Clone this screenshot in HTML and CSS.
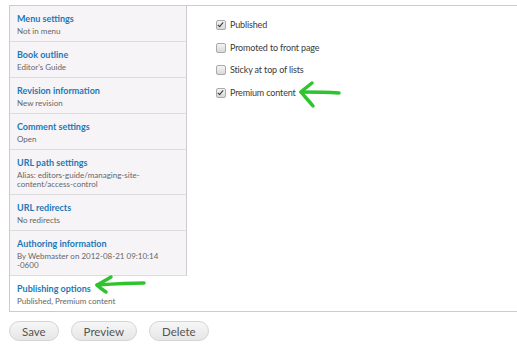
FILE: index.html
```html
<!DOCTYPE html>
<html lang="en">
<head>
    <meta charset="utf-8">
    <title>Publishing options</title>
    <link rel="stylesheet" href="styles.css">
</head>
<body>
    <div class="vtabs">
        <ul class="tabs">
            <li><a href="#">Menu settings</a><span>Not in menu</span></li>
            <li><a href="#">Book outline</a><span>Editor's Guide</span></li>
            <li><a href="#">Revision information</a><span>New revision</span></li>
            <li><a href="#">Comment settings</a><span>Open</span></li>
            <li><a href="#">URL path settings</a><span>Alias: editors-guide/managing-site-content/access-control</span></li>
            <li><a href="#">URL redirects</a><span>No redirects</span></li>
            <li><a href="#">Authoring information</a><span>By Webmaster on 2012-08-21 09:10:14 -0600</span></li>
            <li class="selected"><a href="#">Publishing options</a><span>Published, Premium content</span></li>
        </ul>
        <div class="pane">
            <label class="check"><i class="box on"></i>Published</label>
            <label class="check"><i class="box"></i>Promoted to front page</label>
            <label class="check"><i class="box"></i>Sticky at top of lists</label>
            <label class="check"><i class="box on"></i>Premium content</label>
        </div>
    </div>

    <div class="actions">
        <button>Save</button>
        <button>Preview</button>
        <button>Delete</button>
    </div>

    <!-- hand drawn arrows on top -->
    <svg class="marks" width="517" height="359" viewBox="0 0 517 359">
        <g fill="none" stroke="#2fc42f" stroke-width="3.5" stroke-linecap="round" stroke-linejoin="round">
            <path d="M339 93 C325 92 312 92 301 92"/>
            <path d="M312 83 C307 87 303 90 301 92 C305 97 309 101 313 106"/>
            <path d="M144 283 C128 283 112 284 97 285"/>
            <path d="M111 277 C106 280 101 283 97 285 C100 288 103 290 106 292"/>
        </g>
    </svg>
</body>
</html>
```
FILE: styles.css
```css
html, body {
    margin: 0;
    height: 100%;
}

body {
    position: relative;
    overflow: hidden;
    background: #fff;
    font-family: Lato, "Open Sans", sans-serif;
    padding: 5px 0 0 9px;
    box-sizing: border-box;
}

.vtabs {
    display: flex;
    border: 1px solid #ccc;
    border-right: none;
}

.tabs {
    list-style: none;
    margin: 0;
    padding: 0;
    width: 177px;
    flex: none;
}

.tabs li {
    background: #f6f4f6;
    border-right: 1px solid #ccc;
    border-bottom: 1px solid #dcdcdc;
    padding: 6px 6px 5px 7px;
}

.tabs li.selected {
    background: #fff;
    border: none;
}

.tabs a {
    display: block;
    color: #1c79b8;
    font-weight: bold;
    font-size: 9px;
    line-height: 13px;
    text-decoration: none;
}

.tabs span {
    display: block;
    color: #666;
    font-size: 8px;
    line-height: 9px;
    margin-top: 2px;
}

.pane {
    display: flex;
    flex-direction: column;
    gap: 10px;
    padding: 13px 0 0 29px;
}

.check {
    display: flex;
    align-items: center;
    gap: 4px;
    color: #3a3a3a;
    font-size: 9px;
    letter-spacing: -0.15px;
    line-height: 12.5px;
}

.box {
    width: 8px;
    height: 8px;
    border: 1px solid #aaa;
    border-radius: 2px;
    background: linear-gradient(#f4f4f4, #d8d8d8);
    position: relative;
}

.box.on::after {
    content: "";
    position: absolute;
    left: 2px;
    top: 0px;
    width: 2px;
    height: 5px;
    border: solid #333;
    border-width: 0 1.5px 1.5px 0;
    transform: rotate(40deg);
}

.actions {
    display: flex;
    gap: 12px;
    padding-top: 9px;
}

.actions button {
    font-family: Lato, "Open Sans", sans-serif;
    font-size: 11.5px;
    color: #555;
    height: 20px;
    padding: 0 12px;
    border: 1px solid #d4d4d4;
    border-radius: 10px;
    background: linear-gradient(#f6f6f6, #e6e6e6);
}

.marks {
    position: absolute;
    left: 0;
    top: 0;
    pointer-events: none;
}
```
